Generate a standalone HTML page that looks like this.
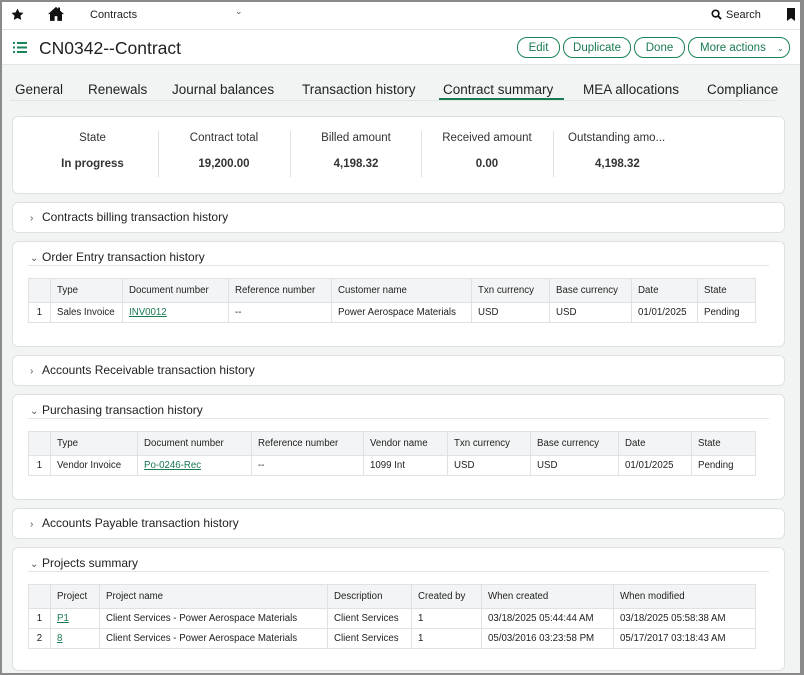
<!DOCTYPE html>
<html><head><meta charset="utf-8"><style>
*{box-sizing:border-box;margin:0;padding:0}
body{width:804px;height:675px;overflow:hidden;font-family:"Liberation Sans",sans-serif;color:#222;background:#f2f4f4;position:relative}
.frame{position:absolute;left:0;top:0;width:804px;height:675px;border:2px solid #8a8a8a;border-right-width:4px;pointer-events:none;z-index:10}
.top{position:absolute;left:0;top:0;width:804px;height:30px;background:#fff;border-bottom:1px solid #e2e5e6}
.hdr{position:absolute;left:0;top:30px;width:804px;height:35px;background:#fff;border-bottom:1px solid #e2e5e6}
.btn{position:absolute;top:37px;height:21px;border:1px solid #1a8456;border-radius:10px;color:#1a7a50;font-size:11.5px;line-height:20px;text-align:center}
.tab{position:absolute;top:82px;font-size:13.5px;color:#222}
.card{position:absolute;left:12px;width:773px;background:#fff;border:1px solid #dde1e2;border-radius:6px}
.ct{position:absolute;left:30px;font-size:12px;color:#222}
.ct .ch{display:inline-block;width:12px;font-size:10px;color:#555}
.rule{position:absolute;left:28px;width:741px;height:1px;background:#e3e6e7}
table{position:absolute;left:28px;border-collapse:collapse;font-size:9.7px;table-layout:fixed}
td{border:1px solid #dfe2e3;padding:0 6px;white-space:nowrap;overflow:hidden}
tr.h td{background:#f3f4f5;height:24px}
tr.r td{height:20px}
td.n{text-align:center;padding:0}
a{color:#1a7a50;text-decoration:underline}
.sl{position:absolute;top:132px;font-size:11.5px;color:#333;text-align:center}
.sv{position:absolute;top:158px;font-size:11.5px;font-weight:bold;color:#333;text-align:center}
.dv{position:absolute;top:131px;width:1px;height:46px;background:#dde1e2}
</style></head><body>
<div class="top">
<svg style="position:absolute;left:11px;top:8px" width="13" height="13" viewBox="0 0 24 24"><path d="M12 1l3.4 7 7.6 1-5.5 5.3 1.3 7.7L12 18.4 5.2 22l1.3-7.7L1 9l7.6-1z" fill="#111"/></svg>
<svg style="position:absolute;left:48px;top:6px" width="16" height="15" viewBox="0 0 24 22"><path d="M12 1L0 12h3v10h7v-7h4v7h7V12h3L18 6.5V2h-3v1.8z" fill="#111"/></svg>
<div style="position:absolute;left:90px;top:9px;font-size:11px">Contracts</div>
<div style="position:absolute;left:235px;top:6px;font-size:9px;color:#555">⌄</div>
<svg style="position:absolute;left:711px;top:9px" width="11" height="11" viewBox="0 0 12 12"><circle cx="5" cy="5" r="3.6" stroke="#111" stroke-width="1.8" fill="none"/><path d="M7.5 7.5L11 11" stroke="#111" stroke-width="2"/></svg>
<div style="position:absolute;left:726px;top:9px;font-size:11px">Search</div>
<svg style="position:absolute;left:787px;top:8px" width="8" height="13" viewBox="0 0 8 13"><path d="M0 0h8v13L4 10 0 13z" fill="#111"/></svg>
</div>
<div class="hdr">
<svg style="position:absolute;left:13px;top:12px" width="14" height="11" viewBox="0 0 14 11"><g fill="#1a8456"><rect x="0" y="0" width="2" height="2"/><rect x="0" y="4.5" width="2" height="2"/><rect x="0" y="9" width="2" height="2"/><rect x="4" y="0" width="10" height="2"/><rect x="4" y="4.5" width="10" height="2"/><rect x="4" y="9" width="10" height="2"/></g></svg>
<div style="position:absolute;left:39px;top:8px;font-size:17.5px;color:#222">CN0342--Contract</div>
</div>
<div class="btn" style="left:517px;width:43px">Edit</div>
<div class="btn" style="left:563px;width:68px">Duplicate</div>
<div class="btn" style="left:634px;width:51px">Done</div>
<div class="btn" style="left:688px;width:102px;text-align:left;padding-left:11px">More actions <span style="font-size:8px;margin-left:8px">⌄</span></div>
<div style="position:absolute;left:10px;top:100px;width:765px;height:1px;background:#e0e3e4"></div>
<div class="tab" style="left:15px">General</div>
<div class="tab" style="left:88px">Renewals</div>
<div class="tab" style="left:172px">Journal balances</div>
<div class="tab" style="left:302px">Transaction history</div>
<div class="tab" style="left:443px">Contract summary</div>
<div style="position:absolute;left:439px;top:98px;width:125px;height:2px;background:#1a7a50"></div>
<div class="tab" style="left:583px">MEA allocations</div>
<div class="tab" style="left:707px">Compliance</div>

<div class="card" style="top:116px;height:78px"></div>
<div class="sl" style="left:25px;width:135px">State</div><div class="sv" style="left:25px;width:135px">In progress</div>
<div class="dv" style="left:158px"></div>
<div class="sl" style="left:158px;width:132px">Contract total</div><div class="sv" style="left:158px;width:132px">19,200.00</div>
<div class="dv" style="left:290px"></div>
<div class="sl" style="left:290px;width:132px">Billed amount</div><div class="sv" style="left:290px;width:132px">4,198.32</div>
<div class="dv" style="left:421px"></div>
<div class="sl" style="left:421px;width:132px">Received amount</div><div class="sv" style="left:421px;width:132px">0.00</div>
<div class="dv" style="left:553px"></div>
<div class="sl" style="left:568px">Outstanding amo...</div><div class="sv" style="left:595px">4,198.32</div>

<div class="card" style="top:202px;height:31px"></div>
<div class="ct" style="top:210px"><span class="ch">›</span>Contracts billing transaction history</div>

<div class="card" style="top:241px;height:106px"></div>
<div class="ct" style="top:250px"><span class="ch">⌄</span>Order Entry transaction history</div>
<div class="rule" style="top:265px"></div>
<table style="top:278px;width:727px">
<colgroup><col style="width:22px"><col style="width:72px"><col style="width:106px"><col style="width:103px"><col style="width:140px"><col style="width:78px"><col style="width:82px"><col style="width:66px"><col style="width:58px"></colgroup>
<tr class="h"><td></td><td>Type</td><td>Document number</td><td>Reference number</td><td>Customer name</td><td>Txn currency</td><td>Base currency</td><td>Date</td><td>State</td></tr>
<tr class="r"><td class="n">1</td><td>Sales Invoice</td><td><a>INV0012</a></td><td>--</td><td>Power Aerospace Materials</td><td>USD</td><td>USD</td><td>01/01/2025</td><td>Pending</td></tr>
</table>

<div class="card" style="top:355px;height:31px"></div>
<div class="ct" style="top:363px"><span class="ch">›</span>Accounts Receivable transaction history</div>

<div class="card" style="top:394px;height:106px"></div>
<div class="ct" style="top:403px"><span class="ch">⌄</span>Purchasing transaction history</div>
<div class="rule" style="top:418px"></div>
<table style="top:431px;width:727px">
<colgroup><col style="width:22px"><col style="width:87px"><col style="width:114px"><col style="width:112px"><col style="width:84px"><col style="width:83px"><col style="width:88px"><col style="width:73px"><col style="width:64px"></colgroup>
<tr class="h"><td></td><td>Type</td><td>Document number</td><td>Reference number</td><td>Vendor name</td><td>Txn currency</td><td>Base currency</td><td>Date</td><td>State</td></tr>
<tr class="r"><td class="n">1</td><td>Vendor Invoice</td><td><a>Po-0246-Rec</a></td><td>--</td><td>1099 Int</td><td>USD</td><td>USD</td><td>01/01/2025</td><td>Pending</td></tr>
</table>

<div class="card" style="top:508px;height:31px"></div>
<div class="ct" style="top:516px"><span class="ch">›</span>Accounts Payable transaction history</div>

<div class="card" style="top:547px;height:124px"></div>
<div class="ct" style="top:556px"><span class="ch">⌄</span>Projects summary</div>
<div class="rule" style="top:571px"></div>
<table style="top:584px;width:727px">
<colgroup><col style="width:22px"><col style="width:49px"><col style="width:228px"><col style="width:84px"><col style="width:70px"><col style="width:132px"><col style="width:142px"></colgroup>
<tr class="h"><td></td><td>Project</td><td>Project name</td><td>Description</td><td>Created by</td><td>When created</td><td>When modified</td></tr>
<tr class="r" style="height:19px"><td class="n">1</td><td><a>P1</a></td><td>Client Services - Power Aerospace Materials</td><td>Client Services</td><td>1</td><td>03/18/2025 05:44:44 AM</td><td>03/18/2025 05:58:38 AM</td></tr>
<tr class="r"><td class="n">2</td><td><a>8</a></td><td>Client Services - Power Aerospace Materials</td><td>Client Services</td><td>1</td><td>05/03/2016 03:23:58 PM</td><td>05/17/2017 03:18:43 AM</td></tr>
</table>
<div class="frame"></div>
</body></html>
